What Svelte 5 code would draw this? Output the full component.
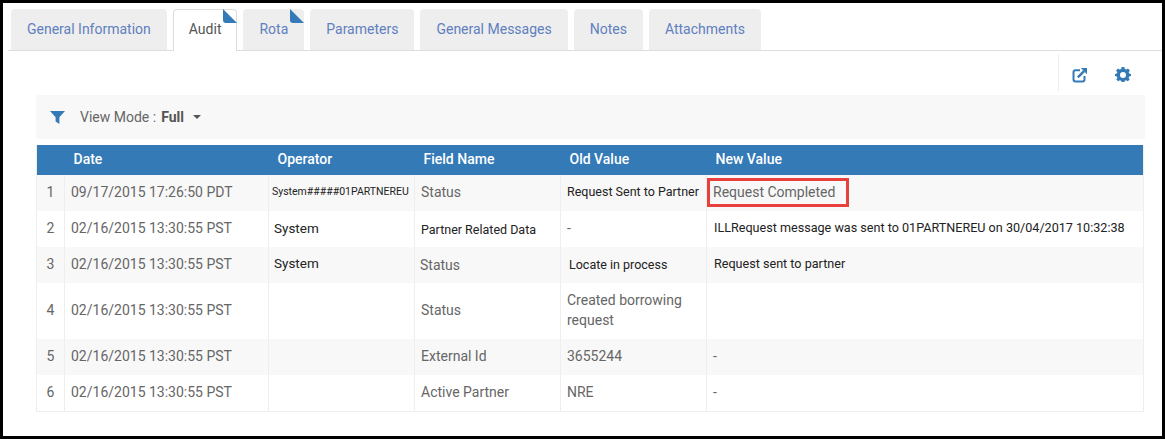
<script>
  const tabs = [
    { label: 'General Information' },
    { label: 'Audit', active: true, flag: true },
    { label: 'Rota', flag: true },
    { label: 'Parameters' },
    { label: 'General Messages' },
    { label: 'Notes' },
    { label: 'Attachments' }
  ];

  const rows = [
    { date: '09/17/2015 17:26:50 PDT', operator: 'System#####01PARTNEREU', opClass: 'tiny', field: 'Status', oldValue: 'Request Sent to Partner', oldClass: 'small', newValue: 'Request Completed', newClass: 'marked' },
    { date: '02/16/2015 13:30:55 PST', operator: 'System', opClass: 'plain', field: 'Partner Related Data', fieldClass: 'small low', oldValue: '-', newValue: 'ILLRequest message was sent to 01PARTNEREU on 30/04/2017 10:32:38', newClass: 'small wide' },
    { date: '02/16/2015 13:30:55 PST', operator: 'System', opClass: 'plain up', field: 'Status', fieldClass: 'shift', oldValue: 'Locate in process', oldClass: 'small nudge', newValue: 'Request sent to partner', newClass: 'small wide' },
    { date: '02/16/2015 13:30:55 PST', operator: '', field: 'Status', oldValue: 'Created borrowing request', newValue: '' },
    { date: '02/16/2015 13:30:55 PST', operator: '', field: 'External Id', oldValue: '3655244', newValue: '-' },
    { date: '02/16/2015 13:30:55 PST', operator: '', field: 'Active Partner', oldValue: 'NRE', newValue: '-' }
  ];
</script>

<div class="frame">
  <nav class="tabs">
    {#each tabs as tab}
      <div class="tab" class:active={tab.active}>
        {tab.label}
        {#if tab.flag}
          <svg class="flag" width="14" height="14" viewBox="0 0 14 14"><path d="M0 0 L14 14 H3 Q0 14 0 11 Z" fill="#337ab7" /></svg>
        {/if}
      </div>
    {/each}
  </nav>

  <div class="actions">
    <div class="action-group">
      <svg width="16" height="16" viewBox="0 0 16 16" fill="none" stroke="#337ab7">
        <path d="M8 3.2 H3.5 Q1.5 3.2 1.5 5.2 V12.5 Q1.5 14.5 3.5 14.5 H10.5 Q12.5 14.5 12.5 12.5 V9" stroke-width="2" />
        <path d="M5.8 10.4 L12 4.2" stroke-width="2.4" />
        <path d="M8.8 1 H15 V7.2 Z" fill="#337ab7" stroke="none" />
      </svg>
      <svg width="16" height="16" viewBox="0 0 16 16">
        <path fill="#337ab7" fill-rule="evenodd" d="M6.6 1 H9.4 L9.8 3 L11.3 3.6 L13 2.5 L14.9 4.6 L13.7 6.2 L14.2 7.6 L16 8 V10 L14.2 10.4 L13.6 11.8 L14.7 13.4 L12.8 15.3 L11.2 14.2 L9.8 14.8 L9.4 16 H6.6 L6.2 14.8 L4.8 14.2 L3.2 15.3 L1.3 13.4 L2.4 11.8 L1.8 10.4 L0 10 V8 L1.8 7.6 L2.3 6.2 L1.1 4.6 L3 2.5 L4.7 3.6 L6.2 3 Z M8 6 A3 3 0 1 0 8 12 A3 3 0 1 0 8 6 Z" transform="translate(0 -1)" />
      </svg>
    </div>
  </div>

  <div class="toolbar">
    <svg width="15" height="13" viewBox="0 0 15 13"><path d="M0 0 H15 L9.4 6.2 V13 L5.6 10.6 V6.2 Z" fill="#337ab7" /></svg>
    <span class="view-label">View Mode :</span>
    <strong>Full</strong>
    <span class="caret"></span>
  </div>

  <table>
    <colgroup>
      <col style="width: 28px" />
      <col style="width: 204px" />
      <col style="width: 146px" />
      <col style="width: 146px" />
      <col style="width: 146px" />
      <col />
    </colgroup>
    <thead>
      <tr>
        <th></th>
        <th>Date</th>
        <th>Operator</th>
        <th>Field Name</th>
        <th>Old Value</th>
        <th>New Value</th>
      </tr>
    </thead>
    <tbody>
      {#each rows as row, i}
        <tr class:tall={i === 3}>
          <td class="num">{i + 1}</td>
          <td>{row.date}</td>
          <td class={row.opClass}>{row.operator}</td>
          <td class={row.fieldClass}>{row.field}</td>
          <td class={row.oldClass}>{row.oldValue}</td>
          <td class={row.newClass}>
            {#if row.newClass === 'marked'}
              <span class="highlight">{row.newValue}</span>
            {:else}
              {row.newValue}
            {/if}
          </td>
        </tr>
      {/each}
    </tbody>
  </table>
</div>

<style>
  :global(body) {
    margin: 0;
    background: #fff;
  }
  .frame {
    box-sizing: border-box;
    width: 1165px;
    height: 439px;
    border: 3px solid #000;
    padding-top: 6px;
    font-family: Roboto, "Liberation Sans", sans-serif;
    font-size: 14px;
    color: #666;
    overflow: hidden;
  }
  .tabs {
    display: flex;
    gap: 6px;
    height: 41px;
    margin-left: 5px;
    padding-left: 3px;
    border-bottom: 1px solid #ddd;
  }
  .tab {
    position: relative;
    box-sizing: border-box;
    height: 41px;
    padding: 12px 16px 0 16px;
    background: #eee;
    border-radius: 4px 4px 0 0;
    color: #5f7fbf;
    line-height: 17px;
    white-space: nowrap;
  }
  .tab.active {
    height: 42px;
    background: #fff;
    color: #555;
    border: 1px solid #ddd;
    border-bottom: 0;
    padding: 11px 15px 0 15px;
    z-index: 1;
  }
  .flag {
    position: absolute;
    top: 0;
    right: 0;
  }
  .active .flag {
    top: -1px;
    right: -1px;
  }
  .actions {
    display: flex;
    justify-content: flex-end;
    height: 40px;
    padding-right: 17px;
    margin-top: 3px;
  }
  .action-group {
    display: flex;
    align-items: flex-start;
    gap: 27px;
    width: 87px;
    box-sizing: border-box;
    padding: 13px 0 0 13px;
    border-left: 1px solid #eee;
    height: 37px;
  }
  .toolbar {
    display: flex;
    align-items: center;
    box-sizing: border-box;
    width: 1109px;
    height: 44px;
    margin: 1px 0 0 33px;
    padding-left: 14px;
    background: #f8f8f8;
    color: #666;
  }
  .view-label {
    margin-left: 15px;
  }
  .toolbar strong {
    margin-left: 5px;
    font-weight: 700;
    color: #555;
  }
  .caret {
    margin-left: 9px;
    border-left: 4px solid transparent;
    border-right: 4px solid transparent;
    border-top: 4px solid #555;
  }
  table {
    width: 1108px;
    margin: 6px 0 0 33px;
    border-collapse: collapse;
    table-layout: fixed;
    border: 1px solid #eee;
    border-top: 0;
  }
  th {
    box-sizing: border-box;
    height: 30px;
    padding: 0 0 2px 9px;
    background: #337ab7;
    color: #fff;
    font-weight: 500;
    text-align: left;
  }
  td {
    box-sizing: border-box;
    height: 36px;
    padding: 0 6px 2px;
    border-left: 1px solid #eee;
    line-height: 20px;
    color: #666;
  }
  tbody tr:nth-child(odd) td {
    background: #f8f8f8;
  }
  tr.tall td {
    height: 56px;
  }
  .num {
    padding: 0 0 2px;
    text-align: center;
  }
  .tiny {
    padding: 0 0 2px 3px;
    font-size: 10.5px;
    color: #222;
    white-space: nowrap;
  }
  .plain {
    color: #222;
    padding-left: 5px;
    font-size: 13.5px;
  }
  .up {
    padding-bottom: 4px;
  }
  .small {
    font-size: 12.5px;
    color: #222;
    white-space: nowrap;
  }
  .wide {
    font-size: 12.6px;
    padding-left: 7px;
  }
  .low {
    padding-top: 3px;
  }
  .shift {
    padding-left: 5px;
    padding-bottom: 0;
    white-space: nowrap;
  }
  .nudge {
    padding-left: 8px;
    padding-bottom: 0;
  }
  .highlight {
    display: block;
    width: 142px;
    box-sizing: border-box;
    height: 29px;
    line-height: 23px;
    border: 3px solid #e8403c;
    padding-left: 3px;
    white-space: nowrap;
  }
  .marked {
    padding: 0 0 2px;
  }
</style>
